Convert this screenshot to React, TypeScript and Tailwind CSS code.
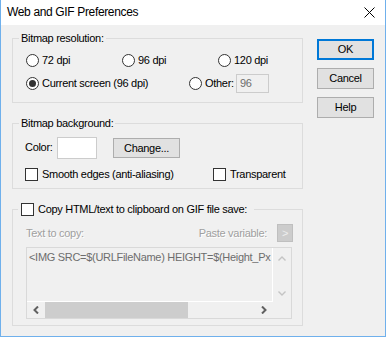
import type { ReactNode } from "react";

function Radio({ checked = false }: { checked?: boolean }) {
  return (
    <span className="flex h-[13px] w-[13px] shrink-0 items-center justify-center rounded-full border border-[#333333] bg-white">
      {checked && <span className="h-[7px] w-[7px] rounded-full bg-[#333333]" />}
    </span>
  );
}

function Check() {
  return <span className="h-[13px] w-[13px] shrink-0 border border-[#333333] bg-white" />;
}

function Button({ children, isDefault = false }: { children: ReactNode; isDefault?: boolean }) {
  return (
    <div
      className={
        "flex h-[21px] w-[57px] items-center justify-center bg-[#e1e1e1] " +
        (isDefault ? "border-2 border-[#0078d7]" : "border border-[#adadad]")
      }
    >
      {children}
    </div>
  );
}

const disabled = "text-[#a0a0a0] [text-shadow:1px_1px_0_#ffffff]";

export default function App() {
  return (
    <div className="h-[337px] w-[386px] overflow-hidden border-x border-b border-[#6fb0ec] bg-[#f0f0f0] font-['Liberation_Sans',Arial,sans-serif] text-[11px] leading-[13px] tracking-[-0.3px] text-black">
      {/* title bar */}
      <div className="flex h-[25px] items-center justify-between bg-white pl-[6px] pr-[10px]">
        <span className="text-[12px] tracking-[-0.35px]">Web and GIF Preferences</span>
        <svg width="11" height="11" viewBox="0 0 11 11">
          <path d="M0.5 0.5L10.5 10.5M10.5 0.5L0.5 10.5" stroke="#000" strokeWidth="1" />
        </svg>
      </div>

      <div className="flex">
        <div className="ml-[11px] w-[291px] shrink-0 pt-[7px]">
          {/* Bitmap resolution */}
          <fieldset className="min-w-0 border border-[#dcdcdc] pb-[9px] pl-[13px]">
            <legend className="-ml-[7px] px-[2px] leading-[13px]">Bitmap resolution:</legend>
            <div className="mt-[5px] flex h-[20px] items-center">
              <div className="flex w-[96px] items-center gap-[3px]">
                <Radio />
                <span>72 dpi</span>
              </div>
              <div className="flex w-[96px] items-center gap-[3px]">
                <Radio />
                <span>96 dpi</span>
              </div>
              <div className="flex items-center gap-[3px]">
                <Radio />
                <span>120 dpi</span>
              </div>
            </div>
            <div className="mt-[3px] flex h-[20px] items-center">
              <div className="flex w-[163px] items-center gap-[3px]">
                <Radio checked />
                <span>Current screen (96 dpi)</span>
              </div>
              <div className="flex items-center gap-[3px]">
                <Radio />
                <span className="w-[31px]">Other:</span>
              </div>
              <div className="flex h-[19px] w-[33px] items-center border border-[#cccccc] pl-[3px] text-[#6d6d6d]">
                96
              </div>
            </div>
          </fieldset>

          {/* Bitmap background */}
          <fieldset className="mt-[14px] min-w-0 border border-[#dcdcdc] pb-[6px] pl-[12px]">
            <legend className="-ml-[6px] px-[2px] leading-[13px]">Bitmap background:</legend>
            <div className="mt-[7px] flex h-[22px] items-start">
              <span className="mt-[4px] w-[32px]">Color:</span>
              <div className="h-[22px] w-[40px] border border-[#cccccc] bg-white" />
              <div className="ml-[16px] mt-[1px] flex h-[20px] w-[67px] items-center justify-center border border-[#adadad] bg-[#e1e1e1]">
                Change...
              </div>
            </div>
            <div className="mt-[7px] flex h-[16px] items-center">
              <div className="flex w-[188px] items-center gap-[4px]">
                <Check />
                <span>Smooth edges (anti-aliasing)</span>
              </div>
              <div className="flex items-center gap-[4px]">
                <Check />
                <span>Transparent</span>
              </div>
            </div>
          </fieldset>

          {/* Copy HTML */}
          <fieldset className="mt-[14px] min-w-0 border border-[#dcdcdc] pb-[6px] pl-[12px] pr-[9px]">
            <legend className="-ml-[7px] pl-[3px] pr-[7px]">
              <div className="flex h-[13px] items-center gap-[4px]">
                <Check />
                <span>Copy HTML/text to clipboard on GIF file save:</span>
              </div>
            </legend>
            <div className="mt-[8px] flex h-[18px] items-center">
              <span className={"ml-[1px] flex-1 " + disabled}>Text to copy:</span>
              <span className={disabled}>Paste variable:</span>
              <div className="ml-[10px] flex h-[18px] w-[16px] items-center justify-center border border-[#bfbfbf] bg-[#cccccc] text-[#eeeeee]">
                &gt;
              </div>
            </div>
            <div className="ml-[1px] mr-[1px] mt-[5px] flex h-[72px] flex-col border border-[#d9d9d9]">
              <div className="flex h-[54px]">
                <div className="min-w-0 flex-1 overflow-hidden whitespace-nowrap border-b border-r border-white pl-[2px] pt-[3px] text-[#6d6d6d]">
                  &lt;IMG SRC=$(URLFileName) HEIGHT=$(Height_Px
                </div>
                <div className="flex w-[18px] shrink-0 flex-col items-center justify-between pb-[6px] pt-[8px]">
                  <svg width="8" height="5" viewBox="0 0 8 5">
                    <path d="M0.5 4.5L4 1L7.5 4.5" fill="none" stroke="#c4c4c4" strokeWidth="1.4" />
                  </svg>
                  <svg width="8" height="5" viewBox="0 0 8 5">
                    <path d="M0.5 0.5L4 4L7.5 0.5" fill="none" stroke="#c4c4c4" strokeWidth="1.4" />
                  </svg>
                </div>
              </div>
              <div className="flex h-[16px]">
                <div className="flex min-w-0 flex-1 items-center">
                  <div className="flex h-full w-[18px] items-center justify-center">
                    <svg width="6" height="8" viewBox="0 0 6 8">
                      <path d="M5 0.5L1.5 4L5 7.5" fill="none" stroke="#606060" strokeWidth="2" />
                    </svg>
                  </div>
                  <div className="h-full w-[143px] bg-[#cdcdcd]" />
                  <div className="flex-1" />
                  <div className="flex h-full w-[18px] items-center justify-center">
                    <svg width="6" height="8" viewBox="0 0 6 8">
                      <path d="M1 0.5L4.5 4L1 7.5" fill="none" stroke="#606060" strokeWidth="2" />
                    </svg>
                  </div>
                </div>
                <div className="w-[18px] shrink-0" />
              </div>
            </div>
          </fieldset>
        </div>

        {/* buttons */}
        <div className="ml-[14px] flex flex-col gap-[8px] pt-[14px]">
          <Button isDefault>OK</Button>
          <Button>Cancel</Button>
          <Button>Help</Button>
        </div>
      </div>
    </div>
  );
}
